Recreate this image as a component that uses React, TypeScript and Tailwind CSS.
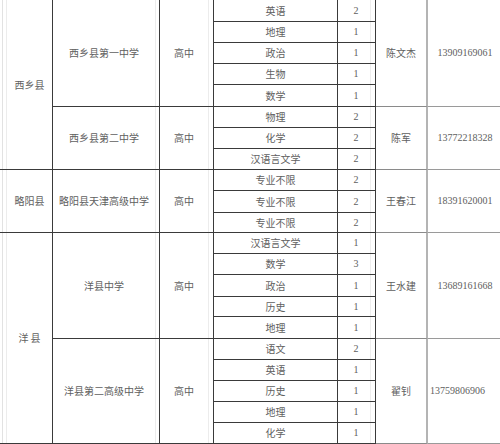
import React from "react";

type School = {
  name: string;
  subjects: [string, string][];
  person: string;
  phone: string;
  phoneLeft?: boolean;
};
type County = { name: string; schools: School[] };

const H = [22, 21, 21, 21, 22, 21, 21, 21, 21, 22, 20, 21, 21, 22, 20, 22, 21, 21, 21, 21, 21];

const data: County[] = [
  {
    name: "西乡县",
    schools: [
      {
        name: "西乡县第一中学",
        subjects: [["英语", "2"], ["地理", "1"], ["政治", "1"], ["生物", "1"], ["数学", "1"]],
        person: "陈文杰",
        phone: "13909169061",
      },
      {
        name: "西乡县第二中学",
        subjects: [["物理", "2"], ["化学", "2"], ["汉语言文学", "2"]],
        person: "陈军",
        phone: "13772218328",
      },
    ],
  },
  {
    name: "略阳县",
    schools: [
      {
        name: "略阳县天津高级中学",
        subjects: [["专业不限", "2"], ["专业不限", "2"], ["专业不限", "2"]],
        person: "王春江",
        phone: "18391620001",
      },
    ],
  },
  {
    name: "洋 县",
    schools: [
      {
        name: "洋县中学",
        subjects: [["汉语言文学", "1"], ["数学", "3"], ["政治", "1"], ["历史", "1"], ["地理", "1"]],
        person: "王水建",
        phone: "13689161668",
      },
      {
        name: "洋县第二高级中学",
        subjects: [["语文", "2"], ["英语", "1"], ["历史", "1"], ["地理", "1"], ["化学", "1"]],
        person: "翟钊",
        phone: "13759806906",
        phoneLeft: true,
      },
    ],
  },
];

const cjk = "font-['Noto_Sans_CJK_SC','Noto_Sans_CJK_JP',sans-serif]";
const num = "font-['Liberation_Serif','Noto_Sans_CJK_SC',serif]";

export default function App() {
  let rowIdx = 0;
  return (
    <div className={`w-[500px] h-[444px] bg-white text-[10px] leading-none text-[#606060] ${cjk} overflow-hidden`}>
      <div className="flex flex-col w-[500px]">
        {data.map((c) => (
          <div key={c.name} className="flex">
            <div className="w-[53px] shrink-0 border-r border-b border-[#3a3a3a] pl-[2px] flex">
              <div className="flex-1 border-l border-[#e2e2e2] pl-[3px] flex">
                <div className="flex-1 border-l border-[#ececec] flex items-center justify-center whitespace-pre">
                  {c.name}
                </div>
              </div>
            </div>
            <div className="flex flex-col flex-1">
              {c.schools.map((s) => (
                <div key={s.name} className="flex">
                  <div className="w-[107px] shrink-0 border-r border-b border-[#3a3a3a] flex items-center justify-center pr-[3px]">
                    <div className="h-full flex items-center justify-center flex-1 border-r border-[#ececec]">{s.name}</div>
                  </div>
                  <div className="w-[54px] shrink-0 border-r border-b border-[#3a3a3a] flex items-center justify-center pr-[4px]">
                    <div className="h-full flex items-center justify-center flex-1 border-r border-[#ececec]">高中</div>
                  </div>
                  <div className="flex flex-col w-[162px] shrink-0">
                    {s.subjects.map(([sub, n], i) => {
                      const h = H[rowIdx++];
                      return (
                        <div key={i} className="flex border-b border-[#3a3a3a]" style={{ height: h }}>
                          <div className="w-[124px] shrink-0 border-r border-[#3a3a3a] flex items-center justify-center">
                            {sub}
                          </div>
                          <div className={`w-[38px] shrink-0 border-r border-[#3a3a3a] flex items-center justify-center pr-[4px] ${num} text-[10px]`}>
                            <div className="h-full flex items-center justify-center flex-1 border-r border-[#eeeeee] pl-[4px]">{n}</div>
                          </div>
                        </div>
                      );
                    })}
                  </div>
                  <div className="w-[52px] shrink-0 border-r-2 border-r-[#b4b4b4] border-b border-b-[#8a8a8a] flex items-center justify-center">
                    {s.person}
                  </div>
                  <div
                    className={`flex-1 border-b border-[#9a9a9a] flex items-center ${num} ${
                      s.phoneLeft ? "justify-start pl-[2px]" : "justify-center pl-[2px]"
                    }`}
                  >
                    {s.phone}
                  </div>
                </div>
              ))}
            </div>
          </div>
        ))}
      </div>
    </div>
  );
}
